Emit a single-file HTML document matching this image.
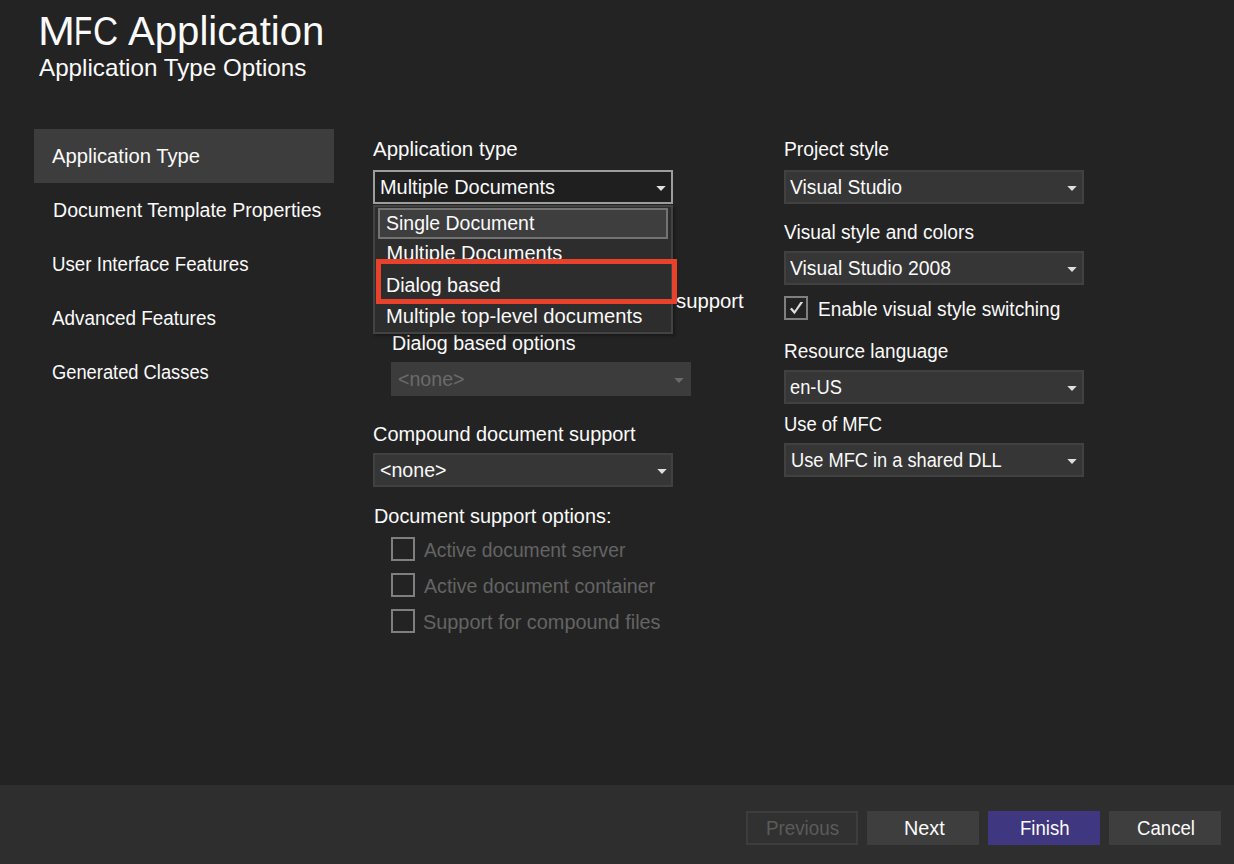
<!DOCTYPE html><html><head><meta charset="utf-8"><style>
html,body{margin:0;padding:0;width:1234px;height:864px;overflow:hidden;background:#232323;}
.b{position:absolute;box-sizing:border-box;}
.t{position:absolute;white-space:pre;font-family:"Liberation Sans",sans-serif;transform-origin:0 0;}
</style></head><body>
<div class="b" style="left:0px;top:785px;width:1234px;height:79px;z-index:1;background:#2e2e2e;"></div>
<div class="b" style="left:34px;top:129px;width:300px;height:54px;z-index:1;background:#3d3d3d;"></div>
<div class="b" style="left:373px;top:170px;width:300px;height:34px;z-index:2;background:#1f1f1f;border:2px solid #9d9d9d;"></div>
<svg class="b" style="left:656px;top:186px;z-index:4" width="10" height="6" viewBox="0 0 10 6"><path d="M0.3 0H9.7L5 4.9Z" fill="#e0e0e0"/></svg>
<div class="b" style="left:391px;top:362px;width:300px;height:34px;z-index:2;background:#3c3c3c;"></div>
<svg class="b" style="left:674px;top:378px;z-index:4" width="10" height="6" viewBox="0 0 10 6"><path d="M0.3 0H9.7L5 4.9Z" fill="#6a6a6a"/></svg>
<div class="b" style="left:373px;top:453px;width:300px;height:34px;z-index:2;background:#363636;border:2px solid #414141;"></div>
<svg class="b" style="left:656.5px;top:469px;z-index:4" width="10" height="6" viewBox="0 0 10 6"><path d="M0.3 0H9.7L5 4.9Z" fill="#e0e0e0"/></svg>
<div class="b" style="left:391px;top:537px;width:24px;height:24px;z-index:2;border:2px solid #7f7f7f;"></div>
<div class="b" style="left:391px;top:573px;width:24px;height:24px;z-index:2;border:2px solid #7f7f7f;"></div>
<div class="b" style="left:391px;top:609px;width:24px;height:24px;z-index:2;border:2px solid #7f7f7f;"></div>
<div class="b" style="left:784px;top:170px;width:300px;height:34px;z-index:2;background:#363636;border:2px solid #414141;"></div>
<svg class="b" style="left:1067px;top:186px;z-index:4" width="10" height="6" viewBox="0 0 10 6"><path d="M0.3 0H9.7L5 4.9Z" fill="#e0e0e0"/></svg>
<div class="b" style="left:784px;top:251px;width:300px;height:34px;z-index:2;background:#363636;border:2px solid #414141;"></div>
<svg class="b" style="left:1067px;top:267px;z-index:4" width="10" height="6" viewBox="0 0 10 6"><path d="M0.3 0H9.7L5 4.9Z" fill="#e0e0e0"/></svg>
<div class="b" style="left:784px;top:370px;width:300px;height:34px;z-index:2;background:#363636;border:2px solid #414141;"></div>
<svg class="b" style="left:1067px;top:386px;z-index:4" width="10" height="6" viewBox="0 0 10 6"><path d="M0.3 0H9.7L5 4.9Z" fill="#e0e0e0"/></svg>
<div class="b" style="left:784px;top:443px;width:300px;height:34px;z-index:2;background:#363636;border:2px solid #414141;"></div>
<svg class="b" style="left:1067px;top:459px;z-index:4" width="10" height="6" viewBox="0 0 10 6"><path d="M0.3 0H9.7L5 4.9Z" fill="#e0e0e0"/></svg>
<div class="b" style="left:784px;top:296px;width:24px;height:24px;z-index:2;border:2px solid #7f7f7f;"></div>
<svg class="b" style="left:784px;top:296px;z-index:3" width="24" height="24" viewBox="0 0 24 24"><path d="M5.9 13.1 L7.8 11.7 L10.6 14.7 L16.4 6.1 L19.2 6.1 L10.5 18.2 Z" fill="#dcdcdc"/></svg>
<div class="b" style="left:373px;top:205px;width:300px;height:129px;z-index:5;background:#2d2d2d;border:2px solid #434343;box-shadow:2px 2px 3px rgba(0,0,0,0.3)"></div>
<div class="b" style="left:378px;top:208px;width:290px;height:31px;z-index:5;background:#3e3e3e;border:2px solid #737373;"></div>
<div class="b" style="left:376px;top:259px;width:301px;height:45px;z-index:8;border:5px solid #e8412c;"></div>
<div class="b" style="left:746px;top:811px;width:112px;height:34px;z-index:2;background:#313131;border:2px solid #3d3d3d;"></div>
<div class="b" style="left:867px;top:811px;width:112px;height:34px;z-index:2;background:#3e3e3e;"></div>
<div class="b" style="left:988px;top:811px;width:112px;height:34px;z-index:2;background:#3f3880;"></div>
<div class="b" style="left:1109px;top:811px;width:112px;height:34px;z-index:2;background:#3e3e3e;"></div>
<div class="t" style="left:37.95px;top:11.2px;font-size:40px;line-height:40px;color:#fafafa;z-index:1;transform:scaleX(1.109)">M</div>
<div class="t" style="left:74.45px;top:11.2px;font-size:40px;line-height:40px;color:#fafafa;z-index:1;transform:scaleX(0.7453)">F</div>
<div class="t" style="left:92.76px;top:11.2px;font-size:40px;line-height:40px;color:#fafafa;z-index:1;transform:scaleX(0.8687)">C</div>
<div class="t" style="left:127.91px;top:11px;font-size:40px;line-height:40px;color:#fafafa;z-index:1;transform:scaleX(1.0038)">Application</div>
<div class="t" style="left:38.94px;top:56px;font-size:24px;line-height:24px;color:#fafafa;z-index:1;transform:scaleX(1.0085)">Application Type Options</div>
<div class="t" style="left:51.74px;top:146px;font-size:20px;line-height:20px;color:#fafafa;z-index:1;transform:scaleX(1.0113)">Application Type</div>
<div class="t" style="left:52.53px;top:200px;font-size:20px;line-height:20px;color:#fafafa;z-index:1;transform:scaleX(0.9786)">Document Template Properties</div>
<div class="t" style="left:52.39px;top:254px;font-size:20px;line-height:20px;color:#fafafa;z-index:1;transform:scaleX(0.9356)">User Interface Features</div>
<div class="t" style="left:52.36px;top:308px;font-size:20px;line-height:20px;color:#fafafa;z-index:1;transform:scaleX(0.9446)">Advanced Features</div>
<div class="t" style="left:51.57px;top:362px;font-size:20px;line-height:20px;color:#fafafa;z-index:1;transform:scaleX(0.9156)">Generated Classes</div>
<div class="t" style="left:373.04px;top:139px;font-size:20px;line-height:20px;color:#fafafa;z-index:1;transform:scaleX(1.0248)">Application type</div>
<div class="t" style="left:380.3px;top:177px;font-size:20px;line-height:20px;color:#fafafa;z-index:3;transform:scaleX(0.9965)">Multiple Documents</div>
<div class="t" style="left:676.28px;top:290.5px;font-size:20px;line-height:20px;color:#fafafa;z-index:1;transform:scaleX(1.0155)">support</div>
<div class="t" style="left:391.92px;top:333px;font-size:20px;line-height:20px;color:#fafafa;z-index:1;transform:scaleX(0.9821)">Dialog based options</div>
<div class="t" style="left:397.93px;top:369px;font-size:20px;line-height:20px;color:#6a6a6a;z-index:3;transform:scaleX(0.9805)">&lt;none&gt;</div>
<div class="t" style="left:373.48px;top:424px;font-size:20px;line-height:20px;color:#fafafa;z-index:1;transform:scaleX(0.9964)">Compound document support</div>
<div class="t" style="left:379.93px;top:459.5px;font-size:20px;line-height:20px;color:#fafafa;z-index:3;transform:scaleX(0.9805)">&lt;none&gt;</div>
<div class="t" style="left:374.31px;top:506.3px;font-size:20px;line-height:20px;color:#fafafa;z-index:1;transform:scaleX(0.9932)">Document support options:</div>
<div class="t" style="left:424.25px;top:540px;font-size:20px;line-height:20px;color:#646464;z-index:1;transform:scaleX(0.9634)">Active document server</div>
<div class="t" style="left:424.25px;top:576px;font-size:20px;line-height:20px;color:#646464;z-index:1;transform:scaleX(0.9808)">Active document container</div>
<div class="t" style="left:423.39px;top:612px;font-size:20px;line-height:20px;color:#646464;z-index:1;transform:scaleX(0.9938)">Support for compound files</div>
<div class="t" style="left:386.11px;top:213px;font-size:20px;line-height:20px;color:#fafafa;z-index:6;transform:scaleX(0.9737)">Single Document</div>
<div class="t" style="left:386.6px;top:243px;font-size:20px;line-height:20px;color:#fafafa;z-index:6;transform:scaleX(1.0)">Multiple Documents</div>
<div class="t" style="left:386.23px;top:275px;font-size:20px;line-height:20px;color:#fafafa;z-index:6;transform:scaleX(0.9817)">Dialog based</div>
<div class="t" style="left:386.18px;top:306px;font-size:20px;line-height:20px;color:#fafafa;z-index:6;transform:scaleX(1.0111)">Multiple top-level documents</div>
<div class="t" style="left:784.35px;top:138.7px;font-size:20px;line-height:20px;color:#fafafa;z-index:1;transform:scaleX(0.9645)">Project style</div>
<div class="t" style="left:790.02px;top:177px;font-size:20px;line-height:20px;color:#fafafa;z-index:3;transform:scaleX(0.963)">Visual Studio</div>
<div class="t" style="left:784.42px;top:221.6px;font-size:20px;line-height:20px;color:#fafafa;z-index:1;transform:scaleX(0.9563)">Visual style and colors</div>
<div class="t" style="left:789.72px;top:257.6px;font-size:20px;line-height:20px;color:#fafafa;z-index:3;transform:scaleX(0.9678)">Visual Studio 2008</div>
<div class="t" style="left:817.67px;top:299.2px;font-size:20px;line-height:20px;color:#fafafa;z-index:1;transform:scaleX(0.9563)">Enable visual style switching</div>
<div class="t" style="left:784.38px;top:341.1px;font-size:20px;line-height:20px;color:#fafafa;z-index:1;transform:scaleX(0.9473)">Resource language</div>
<div class="t" style="left:790.09px;top:376.8px;font-size:20px;line-height:20px;color:#fafafa;z-index:3;transform:scaleX(0.915)">en-US</div>
<div class="t" style="left:784.42px;top:413.5px;font-size:20px;line-height:20px;color:#fafafa;z-index:1;transform:scaleX(0.9193)">Use of MFC</div>
<div class="t" style="left:790.63px;top:450.3px;font-size:20px;line-height:20px;color:#fafafa;z-index:3;transform:scaleX(0.9114)">Use MFC in a shared DLL</div>
<div class="t" style="left:766.29px;top:818px;font-size:20px;line-height:20px;color:#5b5b5b;z-index:3;transform:scaleX(0.9391)">Previous</div>
<div class="t" style="left:903.51px;top:818px;font-size:20px;line-height:20px;color:#fafafa;z-index:3;transform:scaleX(0.9912)">Next</div>
<div class="t" style="left:1019.71px;top:818px;font-size:20px;line-height:20px;color:#fafafa;z-index:3;transform:scaleX(0.9292)">Finish</div>
<div class="t" style="left:1136.56px;top:818px;font-size:20px;line-height:20px;color:#fafafa;z-index:3;transform:scaleX(0.9304)">Cancel</div>
</body></html>
